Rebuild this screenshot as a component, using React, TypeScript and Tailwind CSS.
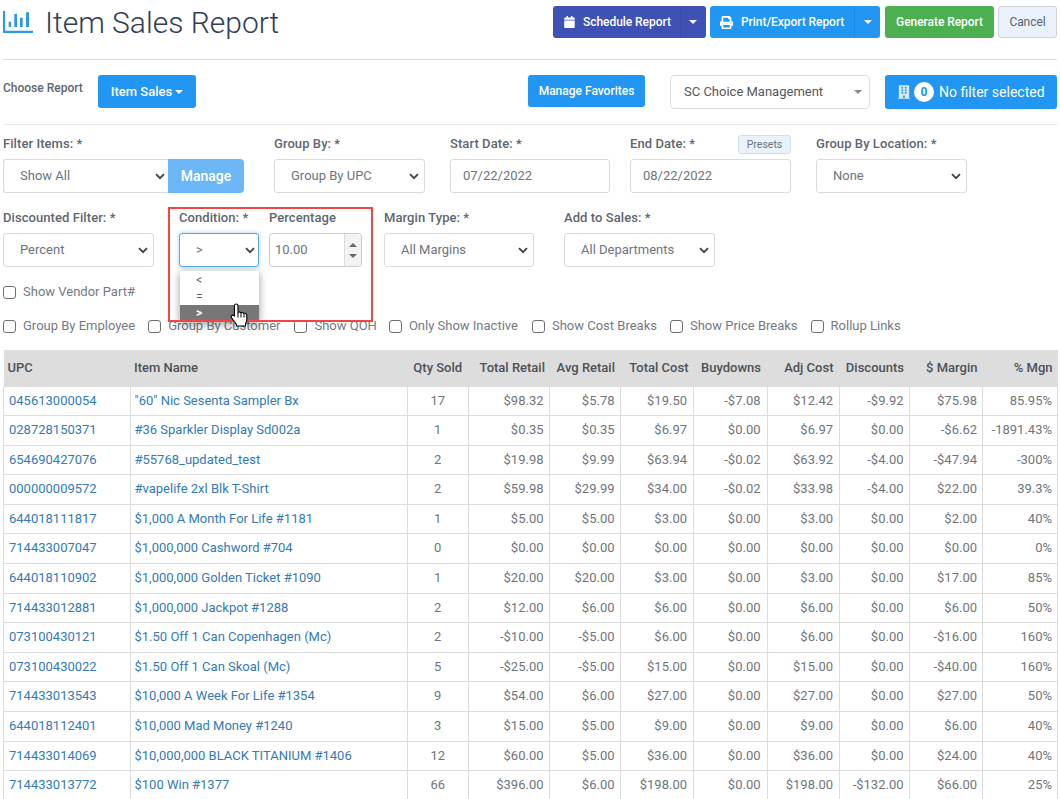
import React from "react";
import { FaCalendar, FaPrint, FaBuilding } from "react-icons/fa";

const rows: string[][] = [
  ["045613000054", '"60" Nic Sesenta Sampler Bx', "17", "$98.32", "$5.78", "$19.50", "-$7.08", "$12.42", "-$9.92", "$75.98", "85.95%"],
  ["028728150371", "#36 Sparkler Display Sd002a", "1", "$0.35", "$0.35", "$6.97", "$0.00", "$6.97", "$0.00", "-$6.62", "-1891.43%"],
  ["654690427076", "#55768_updated_test", "2", "$19.98", "$9.99", "$63.94", "-$0.02", "$63.92", "-$4.00", "-$47.94", "-300%"],
  ["000000009572", "#vapelife 2xl Blk T-Shirt", "2", "$59.98", "$29.99", "$34.00", "-$0.02", "$33.98", "-$4.00", "$22.00", "39.3%"],
  ["644018111817", "$1,000 A Month For Life #1181", "1", "$5.00", "$5.00", "$3.00", "$0.00", "$3.00", "$0.00", "$2.00", "40%"],
  ["714433007047", "$1,000,000 Cashword #704", "0", "$0.00", "$0.00", "$0.00", "$0.00", "$0.00", "$0.00", "$0.00", "0%"],
  ["644018110902", "$1,000,000 Golden Ticket #1090", "1", "$20.00", "$20.00", "$3.00", "$0.00", "$3.00", "$0.00", "$17.00", "85%"],
  ["714433012881", "$1,000,000 Jackpot #1288", "2", "$12.00", "$6.00", "$6.00", "$0.00", "$6.00", "$0.00", "$6.00", "50%"],
  ["073100430121", "$1.50 Off 1 Can Copenhagen (Mc)", "2", "-$10.00", "-$5.00", "$6.00", "$0.00", "$6.00", "$0.00", "-$16.00", "160%"],
  ["073100430022", "$1.50 Off 1 Can Skoal (Mc)", "5", "-$25.00", "-$5.00", "$15.00", "$0.00", "$15.00", "$0.00", "-$40.00", "160%"],
  ["714433013543", "$10,000 A Week For Life #1354", "9", "$54.00", "$6.00", "$27.00", "$0.00", "$27.00", "$0.00", "$27.00", "50%"],
  ["644018112401", "$10,000 Mad Money #1240", "3", "$15.00", "$5.00", "$9.00", "$0.00", "$9.00", "$0.00", "$6.00", "40%"],
  ["714433014069", "$10,000,000 BLACK TITANIUM #1406", "12", "$60.00", "$5.00", "$36.00", "$0.00", "$36.00", "$0.00", "$24.00", "40%"],
  ["714433013772", "$100 Win #1377", "66", "$396.00", "$6.00", "$198.00", "$0.00", "$198.00", "-$132.00", "$66.00", "25%"],
];

const Caret = ({ className = "" }: { className?: string }) => (
  <svg width="8" height="4" viewBox="0 0 8 4" className={className}>
    <path d="M0 0h8L4 4z" fill="currentColor" />
  </svg>
);

const Chevron = () => (
  <svg width="10" height="7" viewBox="0 0 10 7" className="shrink-0 text-[#3f4650]">
    <path d="M1 1.2l4 4 4-4" fill="none" stroke="currentColor" strokeWidth="1.9" />
  </svg>
);

const Label = ({ children }: { children: React.ReactNode }) => (
  <div className="h-[16px] text-[13px] leading-[16px] font-medium tracking-[0.07px] text-[#5e6673] whitespace-nowrap">{children}</div>
);

const Select = ({ text }: { text: string }) => (
  <div className="mt-[7px] flex h-[34px] items-center justify-between rounded-[3px] border border-[#d8dbe0] bg-white pl-[16px] pr-[5px] text-[13px] text-[#6d7480]">
    <span>{text}</span>
    <Chevron />
  </div>
);

const Check = ({ label, className = "" }: { label: string; className?: string }) => (
  <div className={`flex items-center text-[13px] text-[#737a85] whitespace-nowrap ${className}`}>
    <span className="mr-[7px] mt-[1px] h-[13px] w-[13px] rounded-[3px] border border-[#6f6f6f] bg-white" />
    <span>{label}</span>
  </div>
);

const rightPad = ["pr-[5px]", "pr-[5px]", "pr-[6px]", "pr-[6px]", "pr-[6px]", "pr-[5px]", "pr-[5px]", "pr-[5px]"];

export default function App() {
  return (
    <div className="h-[799px] overflow-hidden bg-white px-[3px] font-['Roboto',sans-serif]">
      {/* Title bar */}
      <div className="flex h-[60px] items-start justify-between border-b border-[#dfdfdf] pt-[6px]">
        <div className="flex items-center">
          <svg width="30" height="22" viewBox="0 0 30 22" className="-mt-[2px] text-[#2f96e8]">
            <path d="M1 0v20.8h29" fill="none" stroke="currentColor" strokeWidth="2.3" />
            <path d="M5.7 10.7H8V16H5.7zM11.3 3H14v13h-2.7zM17 6.7h2.7V16H17zM23 1.3h3V16h-3z" fill="currentColor" />
          </svg>
          <h1 className="ml-[12px] text-[30px] leading-[34px] font-light text-[#2f3d58]">Item Sales Report</h1>
        </div>
        <div className="flex items-center text-[12px] font-medium tracking-[-0.05px] text-white">
          <div className="flex h-[32px] w-[153px] items-center rounded-[3px] bg-[#3f51b5]">
            <FaCalendar className="ml-[11px] h-[12px] w-[11px]" />
            <span className="ml-[8px]">Schedule Report</span>
            <span className="ml-[9px] flex h-full flex-1 items-center justify-center border-l border-[#3b4aa8]">
              <Caret />
            </span>
          </div>
          <div className="ml-[4px] flex h-[32px] w-[170px] items-center rounded-[3px] bg-[#2196f3]">
            <FaPrint className="ml-[10px] h-[13px] w-[13px]" />
            <span className="ml-[8px]">Print/Export Report</span>
            <span className="ml-[10px] flex h-full flex-1 items-center justify-center border-l border-[#1e8ae0]">
              <Caret />
            </span>
          </div>
          <div className="ml-[5px] flex h-[32px] w-[109px] items-center justify-center rounded-[3px] bg-[#4caf50]">Generate Report</div>
          <div className="ml-[4px] flex h-[32px] w-[59px] items-center justify-center rounded-[3px] border border-[#ced4da] bg-[#e9f1fa] font-normal text-[#5b6470]">Cancel</div>
        </div>
      </div>

      {/* Choose report */}
      <div className="flex h-[65px] items-start border-b border-[#e9e9e9] pt-[15px]">
        <div className="mt-[6px] w-[95px] text-[12px] leading-[15px] font-medium text-[#5e6673]">Choose Report</div>
        <div className="flex h-[33px] w-[98px] items-center justify-center rounded-[3px] bg-[#2196f3] text-[13px] font-medium text-white">
          Item Sales
          <Caret className="ml-[3px]" />
        </div>
        <div className="ml-[332px] flex h-[32px] w-[117px] items-center justify-center rounded-[3px] bg-[#2196f3] text-[12px] font-medium text-white">Manage Favorites</div>
        <div className="ml-[25px] flex h-[34px] w-[200px] items-center justify-between rounded-[4px] border border-[#dcdfe3] bg-white pl-[13px] pr-[7px] text-[13px] text-[#55585c]">
          <span>SC Choice Management</span>
          <Caret className="text-[#8a8a8a]" />
        </div>
        <div className="ml-[15px] flex h-[34px] w-[172px] items-center rounded-[3px] bg-[#2196f3] text-[14px] text-white">
          <FaBuilding className="ml-[13px] h-[14px] w-[12px] text-[#d6ebfc]" />
          <span className="ml-[4px] flex h-[20px] w-[20px] items-center justify-center rounded-full bg-white text-[12px] font-bold text-[#2196f3]">0</span>
          <span className="ml-[5px]">No filter selected</span>
        </div>
      </div>

      {/* Filter row 1 */}
      <div className="flex pt-[11px]">
        <div className="w-[241px]">
          <Label>Filter Items: *</Label>
          <div className="mt-[7px] flex h-[34px]">
            <div className="flex flex-1 items-center justify-between rounded-l-[3px] border border-r-0 border-[#d8dbe0] pl-[16px] pr-[3px] text-[13px] text-[#6d7480]">
              <span>Show All</span>
              <Chevron />
            </div>
            <div className="flex w-[76px] items-center justify-center rounded-r-[4px] bg-[#6cb8f7] text-[14px] font-medium text-white">Manage</div>
          </div>
        </div>
        <div className="ml-[30px] w-[151px]">
          <Label>Group By: *</Label>
          <Select text="Group By UPC" />
        </div>
        <div className="ml-[25px] w-[160px]">
          <Label>Start Date: *</Label>
          <div className="mt-[7px] flex h-[34px] items-center rounded-[3px] border border-[#d8dbe0] pl-[12px] text-[13px] text-[#6d7480]">07/22/2022</div>
        </div>
        <div className="ml-[20px] w-[161px]">
          <div className="relative">
            <Label>End Date: *</Label>
            <div className="absolute right-0 top-[-1px] flex h-[19px] w-[53px] items-center justify-center rounded-[3px] border border-[#d5dde6] bg-[#e9f1fa] text-[10.5px] text-[#6d7480]">Presets</div>
          </div>
          <div className="mt-[7px] flex h-[34px] items-center rounded-[3px] border border-[#d8dbe0] pl-[12px] text-[13px] text-[#6d7480]">08/22/2022</div>
        </div>
        <div className="ml-[25px] w-[151px]">
          <Label>Group By Location: *</Label>
          <Select text="None" />
        </div>
      </div>

      {/* Filter row 2 */}
      <div className="mt-[17px] flex">
        <div className="w-[151px]">
          <Label>Discounted Filter: *</Label>
          <Select text="Percent" />
        </div>
        <div className="relative ml-[25px] flex">
          <div className="pointer-events-none absolute left-[-11px] top-[-3px] z-20 h-[115px] w-[205px] border-2 border-[#f44444]" />
          <div className="relative w-[80px]">
            <Label>Condition: *</Label>
            <div className="mt-[7px] flex h-[34px] items-center justify-between rounded-[3px] border border-[#5aa9ec] bg-white pl-[16px] pr-[3px] text-[13px] text-[#6d7480] shadow-[0_0_4px_rgba(102,175,233,0.6)]">
              <span>&gt;</span>
              <Chevron />
            </div>
            <div className="absolute left-[1px] top-[61px] z-10 w-[79px] bg-white pt-[1px] text-[12px] leading-[16.5px] text-[#5b6470] shadow-[0_2px_8px_rgba(0,0,0,0.4)]">
              <div className="pl-[16px]">&lt;</div>
              <div className="pl-[16px]">=</div>
              <div className="bg-[#777777] pl-[16px] font-bold text-white">&gt;</div>
            </div>
            <svg width="18" height="24" viewBox="0 0 18 24" className="absolute left-[51px] top-[93px] z-30">
              <path
                d="M6.2 1c1.1 0 1.8.8 1.8 1.9V9.5c.5-.6 2.4-.7 3 .3.6-.5 2.3-.5 2.9.7.7-.4 2.6-.2 2.9 1.3v5.2c0 1.5-.6 2.6-1.3 3.7V23H6.5v-1.6C5.3 20 2.6 16.2 1.3 14.2c-.8-1.2 1-2.9 2.6-1.6l.5.5V2.9C4.4 1.8 5.1 1 6.2 1z"
                fill="white"
                stroke="black"
                strokeWidth="1.1"
                strokeLinejoin="round"
              />
              <path d="M8 9.5v5M11 10v4.5M14 10.8v3.7" fill="none" stroke="black" strokeWidth="1" />
            </svg>
          </div>
          <div className="ml-[10px] w-[93px]">
            <Label>Percentage</Label>
            <div className="mt-[7px] flex h-[34px] rounded-[4px] border border-[#c9cdd2] bg-white text-[13px] text-[#6d7480]">
              <span className="flex flex-1 items-center pl-[5px]">10.00</span>
              <span className="flex w-[17px] flex-col items-center justify-center gap-[7px] rounded-r-[4px] border-l border-[#d8dbe0] bg-[#f3f3f3] text-[#666]">
                <Caret className="rotate-180" />
                <Caret />
              </span>
            </div>
          </div>
        </div>
        <div className="ml-[22px] w-[150px]">
          <Label>Margin Type: *</Label>
          <Select text="All Margins" />
        </div>
        <div className="ml-[30px] w-[151px]">
          <Label>Add to Sales: *</Label>
          <Select text="All Departments" />
        </div>
      </div>

      <Check label="Show Vendor Part#" className="mt-[16px] h-[18px]" />

      <div className="mt-[16px] flex h-[18px]">
        <Check label="Group By Employee" />
        <Check label="Group By Customer" className="ml-[13px]" />
        <Check label="Show QOH" className="ml-[14px]" />
        <Check label="Only Show Inactive" className="ml-[12px]" />
        <Check label="Show Cost Breaks" className="ml-[14px]" />
        <Check label="Show Price Breaks" className="ml-[13px]" />
        <Check label="Rollup Links" className="ml-[13px]" />
      </div>

      {/* Table */}
      <table className="mt-[15px] w-[1054px] table-fixed border-collapse text-[13px] leading-[18.6px] text-[#70757c]">
        <thead>
          <tr className="h-[36px] bg-[#dddddd] text-[#4d5157]">
            <th className="w-[126.5px] pl-[4px] pt-[1px] text-left font-medium">UPC</th>
            <th className="w-[277.5px] pl-[4px] pt-[1px] text-left font-medium">Item Name</th>
            <th className="w-[60.5px] px-[2px] pt-[1px] text-center font-medium">Qty Sold</th>
            <th className="w-[81px] pr-[4px] pt-[1px] text-right font-medium">Total Retail</th>
            <th className="w-[71px] pr-[5px] pt-[1px] text-right font-medium">Avg Retail</th>
            <th className="w-[73.5px] pr-[5px] pt-[1px] text-right font-medium">Total Cost</th>
            <th className="w-[73.5px] pr-[6px] pt-[1px] text-right font-medium">Buydowns</th>
            <th className="w-[72.5px] pr-[6px] pt-[1px] text-right font-medium">Adj Cost</th>
            <th className="w-[69.5px] pr-[5px] pt-[1px] text-right font-medium">Discounts</th>
            <th className="w-[73.5px] pr-[5px] pt-[1px] text-right font-medium">$ Margin</th>
            <th className="w-[75px] pr-[5px] pt-[1px] text-right font-medium">% Mgn</th>
          </tr>
        </thead>
        <tbody>
          {rows.map((r) => (
            <tr key={r[0]}>
              <td className="border border-[#dddddd] py-[5px] pl-[5px] text-[#337ab7]">{r[0]}</td>
              <td className="border border-[#dddddd] py-[5px] pl-[4px] text-[#337ab7] whitespace-nowrap">{r[1]}</td>
              <td className="border border-[#dddddd] px-[2px] py-[5px] text-center">{r[2]}</td>
              {r.slice(3).map((v, i) => (
                <td key={i} className={`border border-[#dddddd] py-[5px] text-right whitespace-nowrap ${rightPad[i]}`}>{v}</td>
              ))}
            </tr>
          ))}
        </tbody>
      </table>
    </div>
  );
}
